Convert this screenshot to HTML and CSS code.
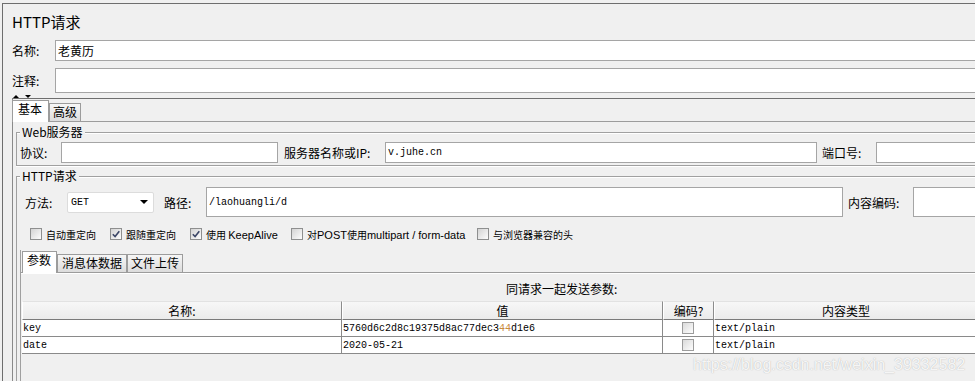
FILE: index.html
```html
<!DOCTYPE html>
<html lang="zh-CN">
<head>
    <meta charset="UTF-8">
    <title>HTTP请求</title>
    <link rel="stylesheet" href="styles.css">
</head>
<body>
    <div class="window">
        <h1 class="title">HTTP请求</h1>

        <div class="line-row name-row">
            <label class="lbl">名称:</label>
            <input class="text grow" type="text" value="老黄历">
        </div>
        <div class="line-row comment-row">
            <label class="lbl">注释:</label>
            <input class="text grow" type="text">
        </div>
        <div class="arrows"><span class="up"></span><span class="down"></span></div>

        <div class="panel">
            <div class="tabs">
                <div class="tab active">基本</div>
                <div class="tab">高级</div>
            </div>

            <div class="tab-body">
                <!-- Web server -->
                <fieldset class="group">
                    <legend>Web服务器</legend>
                    <div class="group-row">
                        <label class="lbl w-proto">协议:</label>
                        <input class="text proto" type="text">
                        <label class="lbl w-host">服务器名称或IP:</label>
                        <input class="text host mono" type="text" value="v.juhe.cn">
                        <label class="lbl w-port">端口号:</label>
                        <input class="text grow" type="text">
                    </div>
                </fieldset>

                <!-- HTTP request -->
                <fieldset class="group req">
                    <legend>HTTP请求</legend>
                    <div class="group-row req-row">
                        <label class="lbl w-method">方法:</label>
                        <div class="select"><span class="mono">GET</span><span class="caret"></span></div>
                        <label class="lbl w-path">路径:</label>
                        <input class="text path mono" type="text" value="/laohuangli/d">
                        <label class="lbl w-enc">内容编码:</label>
                        <input class="text grow" type="text">
                    </div>

                    <div class="options">
                        <div class="opt w80"><span class="cb"></span><span>自动重定向</span></div>
                        <div class="opt w80"><span class="cb"><svg viewBox="0 0 10 10" width="10" height="10"><path d="M1.8 5.2 L4.1 7.6 L8.3 2.3" fill="none" stroke="#3b4666" stroke-width="1.6"/></svg></span><span>跟随重定向</span></div>
                        <div class="opt w101"><span class="cb"><svg viewBox="0 0 10 10" width="10" height="10"><path d="M1.8 5.2 L4.1 7.6 L8.3 2.3" fill="none" stroke="#3b4666" stroke-width="1.6"/></svg></span><span>使用 <span class="en">KeepAlive</span></span></div>
                        <div class="opt w186"><span class="cb"></span><span>对<span class="en">POST</span>使用<span class="en">multipart / form-data</span></span></div>
                        <div class="opt"><span class="cb"></span><span>与浏览器兼容的头</span></div>
                    </div>

                    <div class="subpane">
                        <div class="subtabs">
                            <div class="subtab active">参数</div>
                            <div class="subtab t2">消息体数据</div>
                            <div class="subtab t3">文件上传</div>
                        </div>
                        <div class="subbody">
                            <div class="caption">同请求一起发送参数:</div>
                            <table class="params">
                                <thead>
                                    <tr>
                                        <th class="c1">名称:</th>
                                        <th class="c2">值</th>
                                        <th class="c3">编码?</th>
                                        <th class="c4">内容类型</th>
                                    </tr>
                                </thead>
                                <tbody>
                                    <tr>
                                        <td>key</td>
                                        <td>5760d6c2d8c19375d8ac77dec3<span class="hl">44</span>d1e6</td>
                                        <td class="center"><span class="cb small"></span></td>
                                        <td>text/plain</td>
                                    </tr>
                                    <tr>
                                        <td>date</td>
                                        <td>2020-05-21</td>
                                        <td class="center"><span class="cb small"></span></td>
                                        <td>text/plain</td>
                                    </tr>
                                </tbody>
                            </table>
                        </div>
                    </div>
                </fieldset>
            </div>
        </div>
    </div>

    <div class="watermark">https://blog.csdn.net/weixin_39332582</div>
</body>
</html>
```

FILE: styles.css
```css
* {
    box-sizing: border-box;
}
html {
    overflow: hidden;
}
body {
    margin: 0;
    padding: 3px 0 0 2px;
    height: 381px;
    position: relative;
    background: #f0f0f0;
    font-family: "Noto Sans CJK SC", "Liberation Sans", sans-serif;
    font-size: 12px;
    color: #000;
}
.window {
    width: 973px;
    height: 378px;
    overflow: hidden;
    border-top: 1px solid #6e6e6e;
    border-left: 1px solid #6e6e6e;
}
.title {
    margin: 0;
    height: 36px;
    padding: 8px 0 0 9px;
    font-size: 15px;
    font-weight: normal;
    line-height: 20px;
}
.mono {
    font-family: "Liberation Mono", monospace;
    font-size: 10px;
}
.text {
    margin: 0;
    height: 100%;
    padding: 0 2px;
    border: 1px solid #a5a5a5;
    border-right: none;
    background: #fff;
    font: 12px "Noto Sans CJK SC", sans-serif;
    color: #000;
    outline: none;
}
.proto, .host, .path {
    border-right: 1px solid #a5a5a5;
}
.text.mono {
    font: 10px "Liberation Mono", monospace;
}
.grow {
    flex: 1 1 0;
    min-width: 0;
}
.lbl {
    flex: none;
    white-space: nowrap;
}

/* name / comment */
.line-row {
    display: flex;
    align-items: center;
    padding-left: 9px;
}
.line-row .lbl {
    width: 43px;
}
.name-row {
    height: 21px;
    margin-bottom: 7px;
}
.comment-row {
    height: 25px;
}
.arrows {
    height: 5px;
    display: flex;
    align-items: flex-end;
    gap: 6px;
    padding-left: 10px;
    overflow: hidden;
}
.up {
    border-left: 3px solid transparent;
    border-right: 3px solid transparent;
    border-bottom: 3px solid #000;
}
.down {
    border-left: 3px solid transparent;
    border-right: 3px solid transparent;
    border-top: 3px solid #000;
}

/* main tabbed panel */
.panel {
    margin-left: 9px;
    height: 300px;
    border-top: 1px solid #6e6e6e;
    border-left: 1px solid #8a8a8a;
}
.tabs {
    display: flex;
    align-items: flex-end;
    height: 23px;
    margin-left: -1px;
    border-bottom: 1px solid #9c9c9c;
}
.tab {
    height: 18px;
    padding: 0 3px;
    line-height: 16px;
    border: 1px solid #9c9c9c;
    border-bottom: none;
    background: linear-gradient(#f6f6f6, #dcdcdc);
}
.tab.active {
    height: 22px;
    margin-bottom: -1px;
    padding: 0 6px 0 5px;
    background: #fff;
}
.tab-body {
    padding-left: 3px;
}

/* groups */
.group {
    min-width: 0;
    margin: 3px 0 0;
    padding: 3px 0 2px 3px;
    border: 1px solid #a0a0a0;
    border-right: none;
    box-shadow: inset 0 1px #fff, 0 1px #fff;
}
.group legend {
    padding: 0 2px;
    font-size: 12px;
    line-height: 14px;
    background: #f0f0f0;
}
.group-row {
    display: flex;
    align-items: center;
    height: 21px;
}
.w-proto { width: 41px; }
.proto { width: 217px; }
.w-host { width: 101px; margin-left: 6px; }
.host { width: 432px; }
.w-port { width: 54px; margin-left: 5px; }

.req-row {
    height: 30px;
    margin-top: 1px;
    padding-left: 5px;
}
.w-method { width: 42px; }
.w-path { width: 42px; margin-left: 10px; }
.path { width: 637px; }
.w-enc { width: 65px; margin-left: 5px; }
.select {
    width: 87px;
    height: 21px;
    display: flex;
    align-items: center;
    justify-content: space-between;
    padding: 0 5px 0 3px;
    background: #fff;
    border: 1px solid #dcdcdc;
    border-radius: 2px;
}
.caret {
    border-left: 4px solid transparent;
    border-right: 4px solid transparent;
    border-top: 4px solid #000;
}

/* check boxes */
.options {
    display: flex;
    align-items: center;
    height: 12px;
    margin-top: 11px;
    padding-left: 10px;
}
.opt {
    display: flex;
    align-items: center;
    gap: 4px;
    font-size: 10px;
    white-space: nowrap;
}
.opt .en {
    font-family: "Liberation Sans", sans-serif;
    font-size: 11px;
}
.w80 { width: 80px; }
.w101 { width: 101px; }
.w186 { width: 186px; }
.cb {
    flex: none;
    display: inline-flex;
    align-items: center;
    justify-content: center;
    width: 12px;
    height: 12px;
    border: 1px solid #8e8f8f;
    background: linear-gradient(135deg, #d3d3d3, #fdfdfd);
}
.cb.small {
    vertical-align: middle;
    border-color: #9c9c9c;
    background: linear-gradient(135deg, #dadada, #fdfdfd);
}

/* parameters */
.subpane {
    margin-top: 10px;
    border-left: 1px solid #a0a0a0;
}
.subtabs {
    display: flex;
    align-items: flex-end;
    height: 23px;
    padding-left: 1px;
    border-bottom: 1px solid #9c9c9c;
}
.subtab {
    height: 18px;
    line-height: 16px;
    border: 1px solid #9c9c9c;
    border-bottom: none;
    background: linear-gradient(#f6f6f6, #dcdcdc);
}
.subtab.active {
    height: 22px;
    margin-bottom: -1px;
    padding: 0 5px 0 4px;
    background: #fff;
}
.subtab.t2 { padding: 0 4px; }
.subtab.t3 { padding: 0 3px; }
.subbody {
    height: 120px;
    border-top: 1px solid #fff;
}
.caption {
    margin-top: 7px;
    padding-left: 485px;
    line-height: 16px;
}
.params {
    margin: 4px 0 0 1px;
    border-collapse: separate;
    border-spacing: 0;
    table-layout: fixed;
    width: 955px;
}
.params th {
    height: 19px;
    padding: 0;
    font-weight: normal;
    line-height: 17px;
    background: linear-gradient(#f7f7f7, #ebebeb);
    border-top: 1px solid #e2e2e2;
    border-left: 1px solid #fff;
    border-right: 1px solid #8c8c8c;
    border-bottom: 1px solid #7a7a7a;
}
.params .c1 { width: 320px; }
.params .c2 { width: 321px; }
.params .c3 { width: 51px; }
.params .c4 { width: 263px; border-right: none; }
.params td {
    height: 17px;
    padding: 0 1px;
    background: #fff;
    border-right: 1px solid #8a8a8a;
    border-bottom: 1px solid #8a8a8a;
    font: 10px/15px "Liberation Mono", monospace;
    white-space: nowrap;
    overflow: hidden;
}
.params td:last-child {
    border-right: none;
}
.params td.center {
    text-align: center;
}
.hl {
    color: #c98a3c;
}
.watermark {
    position: absolute;
    left: 693px;
    top: 355px;
    font: 16px/20px "Liberation Sans", sans-serif;
    color: rgba(255, 255, 255, 0.9);
    text-shadow: 0 0 1px rgba(100, 100, 100, 0.5);
    white-space: nowrap;
}
```
